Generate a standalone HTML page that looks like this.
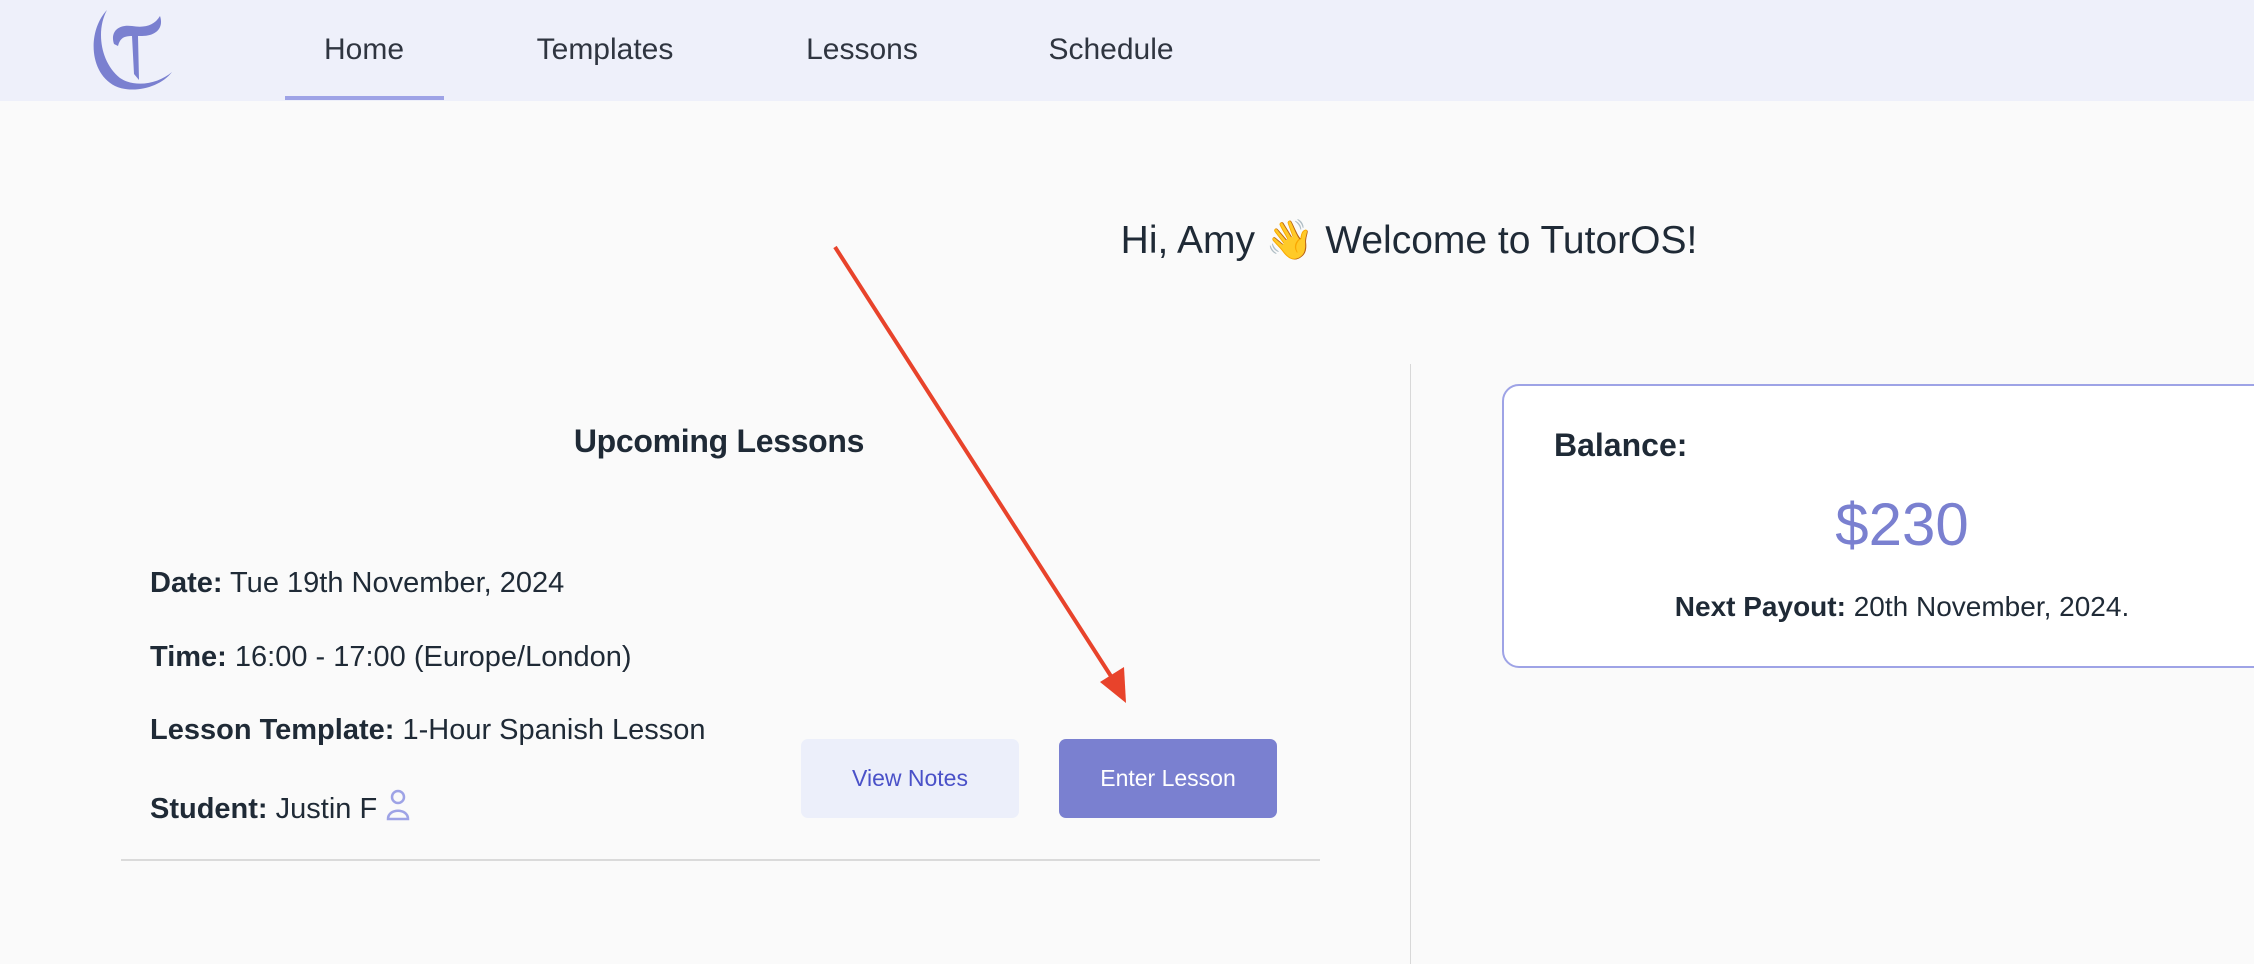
<!DOCTYPE html>
<html><head><meta charset="utf-8"><style>
*{margin:0;padding:0;box-sizing:border-box}
body{width:2254px;height:956px;overflow:hidden;background:#fafafa;font-family:"Liberation Sans",sans-serif;color:#1f2a36;position:relative}
.nav{position:absolute;left:0;top:0;width:2254px;height:101px;background:#eef0fa}
.nl{position:absolute;top:33px;font-size:30px;color:#2f3540;transform:translateX(-50%);letter-spacing:0}
.ul{position:absolute;left:285px;top:96px;width:159px;height:4px;background:#9ea3e6}
.t{position:absolute;white-space:nowrap}
.c{transform:translateX(-50%)}
.row{position:absolute;left:150px;font-size:29px;letter-spacing:0}
.row b{font-weight:bold}
.btn{position:absolute;top:739px;height:79px;border-radius:7px;font-size:23px;display:flex;align-items:center;justify-content:center}
</style></head><body>
<div class="nav"></div>
<svg style="position:absolute;left:80px;top:0" width="110" height="100" viewBox="0 0 110 100">
<path d="M27 10 C8 30 8 72 35 86 C52 94 80 88 92 72 C78 84 55 88 40 78 C20 62 16 30 27 10Z" fill="#7a80d0"/>
<path d="M34 44 C30 32 38 24 52 26 C64 28 74 26 80 16 C84 28 76 36 62 36 L58 36 L59 80 L54 74 L52 36 C44 36 40 38 38 46Z" fill="#7a80d0"/>
</svg>
<div class="nl" style="left:364px">Home</div>
<div class="nl" style="left:605px">Templates</div>
<div class="nl" style="left:862px">Lessons</div>
<div class="nl" style="left:1111px">Schedule</div>
<div class="ul"></div>
<div class="t c" style="left:1409px;top:217px;font-size:39px">Hi, Amy 👋 Welcome to TutorOS!</div>
<div style="position:absolute;left:1410px;top:364px;width:1px;height:600px;background:#d8d8d8"></div>
<div class="t c" style="left:719px;top:423px;font-size:32px;font-weight:bold;letter-spacing:-0.3px">Upcoming Lessons</div>
<div class="row t" style="top:567px"><b>Date:</b> Tue 19th November, 2024</div>
<div class="row t" style="top:641px"><b>Time:</b> 16:00 - 17:00 (Europe/London)</div>
<div class="row t" style="top:714px"><b>Lesson Template:</b> 1-Hour Spanish Lesson</div>
<div class="row t" style="top:788px"><b>Student:</b> Justin F <svg width="26" height="34" viewBox="0 0 26 34" style="vertical-align:-4px"><circle cx="13" cy="9" r="6" fill="none" stroke="#9ea3e6" stroke-width="2.5"/><path d="M3 31 C3 20 23 20 23 31Z" fill="none" stroke="#9ea3e6" stroke-width="2.5"/></svg></div>
<div class="btn" style="left:801px;width:218px;background:#eceffa;color:#4a51c8">View Notes</div>
<div class="btn" style="left:1059px;width:218px;background:#7a80d0;color:#fff">Enter Lesson</div>
<div style="position:absolute;left:121px;top:859px;width:1199px;height:2px;background:#dadada"></div>
<div style="position:absolute;left:1502px;top:384px;width:800px;height:284px;background:#fff;border:2px solid #9ea3e6;border-radius:17px"></div>
<div class="t" style="left:1554px;top:427px;font-size:32px;font-weight:bold">Balance:</div>
<div class="t c" style="left:1902px;top:490px;font-size:60px;color:#7a80d0">$230</div>
<div class="t c" style="left:1902px;top:591px;font-size:28px"><b>Next Payout:</b> 20th November, 2024.</div>
<svg style="position:absolute;left:0;top:0" width="2254" height="956">
<line x1="835" y1="247" x2="1116" y2="684" stroke="#e8432b" stroke-width="4"/>
<polygon points="1126,703 1100,682 1124,667" fill="#e8432b"/>
</svg>
</body></html>
